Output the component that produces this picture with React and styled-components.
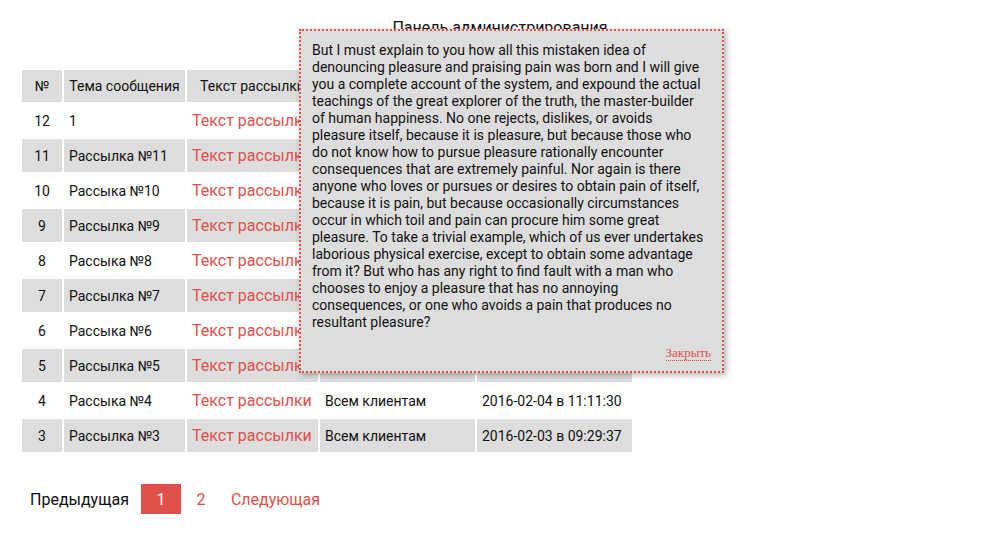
import React from 'react';
import styled, { createGlobalStyle } from 'styled-components';

const RED = '#e0504b';

const GlobalStyle = createGlobalStyle`
  body {
    margin: 8px;
    background: #fff;
    font-family: Roboto, "Liberation Sans", sans-serif;
    color: #111;
  }
`;

const Page = styled.div`
  position: relative;
  padding: 10px 12px 0;
`;

const Title = styled.div`
  text-align: center;
  font-size: 16px;
  line-height: 19px;
`;

const Table = styled.table`
  margin-top: 31px;
  border-collapse: separate;
  border-spacing: 2px;
  font-size: 14px;
`;

const Th = styled.th`
  height: 32px;
  padding: 0 5px;
  font-weight: normal;
  text-align: center;
  background: #dddddd;
  width: ${p => p.w}px;
  box-sizing: border-box;
`;

const Row = styled.tr`
  background: ${p => (p.gray ? '#dddddd' : '#fff')};
`;

const Td = styled.td`
  height: 33px;
  padding: 0 5px;
  text-align: ${p => (p.center ? 'center' : 'left')};
  white-space: nowrap;
`;

const LinkCell = styled(Td)`
  color: ${RED};
  font-size: 16px;
`;

const Pager = styled.div`
  display: flex;
  align-items: center;
  margin-top: 30px;
  font-size: 16px;
`;

const PageItem = styled.span`
  min-width: 40px;
  height: 30px;
  padding: 0 ${p => (p.muted ? '12px' : '10px')} 0 10px;
  box-sizing: border-box;
  display: flex;
  align-items: center;
  justify-content: center;
  color: ${p => (p.active ? '#fff' : p.muted ? '#111' : RED)};
  background: ${p => (p.active ? RED : 'transparent')};
`;

const Popup = styled.div`
  position: absolute;
  left: 291px;
  top: 21px;
  width: 425px;
  box-sizing: border-box;
  background: #dddddd;
  border: 2px dotted ${RED};
  box-shadow: 2px 2px 6px rgba(0, 0, 0, 0.3);
  padding: 11px 11px 10px;
  font-size: 14px;
  line-height: 17px;
  color: #111;
`;

const PopupText = styled.p`
  margin: 0 0 13px;
  white-space: nowrap;
`;

const CloseRow = styled.div`
  text-align: right;
`;

const Close = styled.span`
  font-family: "Liberation Serif", serif;
  font-size: 13px;
  color: ${RED};
  border-bottom: 1px dotted ${RED};
  line-height: 14px;
`;

const rows = [
  { id: 12, name: '1' },
  { id: 11, name: 'Рассылка №11' },
  { id: 10, name: 'Рассыка №10' },
  { id: 9, name: 'Рассылка №9' },
  { id: 8, name: 'Рассыка №8' },
  { id: 7, name: 'Рассылка №7' },
  { id: 6, name: 'Рассыка №6' },
  { id: 5, name: 'Рассылка №5' },
  { id: 4, name: 'Рассыка №4', date: '2016-02-04 в 11:11:30' },
  { id: 3, name: 'Рассылка №3', date: '2016-02-03 в 09:29:37' },
];

const lines = [
  'But I must explain to you how all this mistaken idea of',
  'denouncing pleasure and praising pain was born and I will give',
  'you a complete account of the system, and expound the actual',
  'teachings of the great explorer of the truth, the master-builder',
  'of human happiness. No one rejects, dislikes, or avoids',
  'pleasure itself, because it is pleasure, but because those who',
  'do not know how to pursue pleasure rationally encounter',
  'consequences that are extremely painful. Nor again is there',
  'anyone who loves or pursues or desires to obtain pain of itself,',
  'because it is pain, but because occasionally circumstances',
  'occur in which toil and pain can procure him some great',
  'pleasure. To take a trivial example, which of us ever undertakes',
  'laborious physical exercise, except to obtain some advantage',
  'from it? But who has any right to find fault with a man who',
  'chooses to enjoy a pleasure that has no annoying',
  'consequences, or one who avoids a pain that produces no',
  'resultant pleasure?',
];

export default function App() {
  return (
    <Page>
      <GlobalStyle />
      <Title>Панель администрирования</Title>
      <Table>
        <thead>
          <tr>
            <Th w={40}>№</Th>
            <Th w={121}>Тема сообщения</Th>
            <Th w={131}>Текст рассылки</Th>
            <Th w={155}>Получатели</Th>
            <Th w={155}>Дата отправки</Th>
          </tr>
        </thead>
        <tbody>
          {rows.map((r, i) => (
            <Row key={r.id} gray={i % 2 === 1}>
              <Td center>{r.id}</Td>
              <Td>{r.name}</Td>
              <LinkCell>Текст рассылки</LinkCell>
              <Td>Всем клиентам</Td>
              <Td>{r.date || '2016-02-05 в 10:00:00'}</Td>
            </Row>
          ))}
        </tbody>
      </Table>
      <Pager>
        <PageItem muted>Предыдущая</PageItem>
        <PageItem active>1</PageItem>
        <PageItem>2</PageItem>
        <PageItem>Следующая</PageItem>
      </Pager>
      <Popup>
        <PopupText>
          {lines.map((l, i) => (
            <React.Fragment key={i}>
              {l}
              {i < lines.length - 1 && <br />}
            </React.Fragment>
          ))}
        </PopupText>
        <CloseRow>
          <Close>Закрыть</Close>
        </CloseRow>
      </Popup>
    </Page>
  );
}
